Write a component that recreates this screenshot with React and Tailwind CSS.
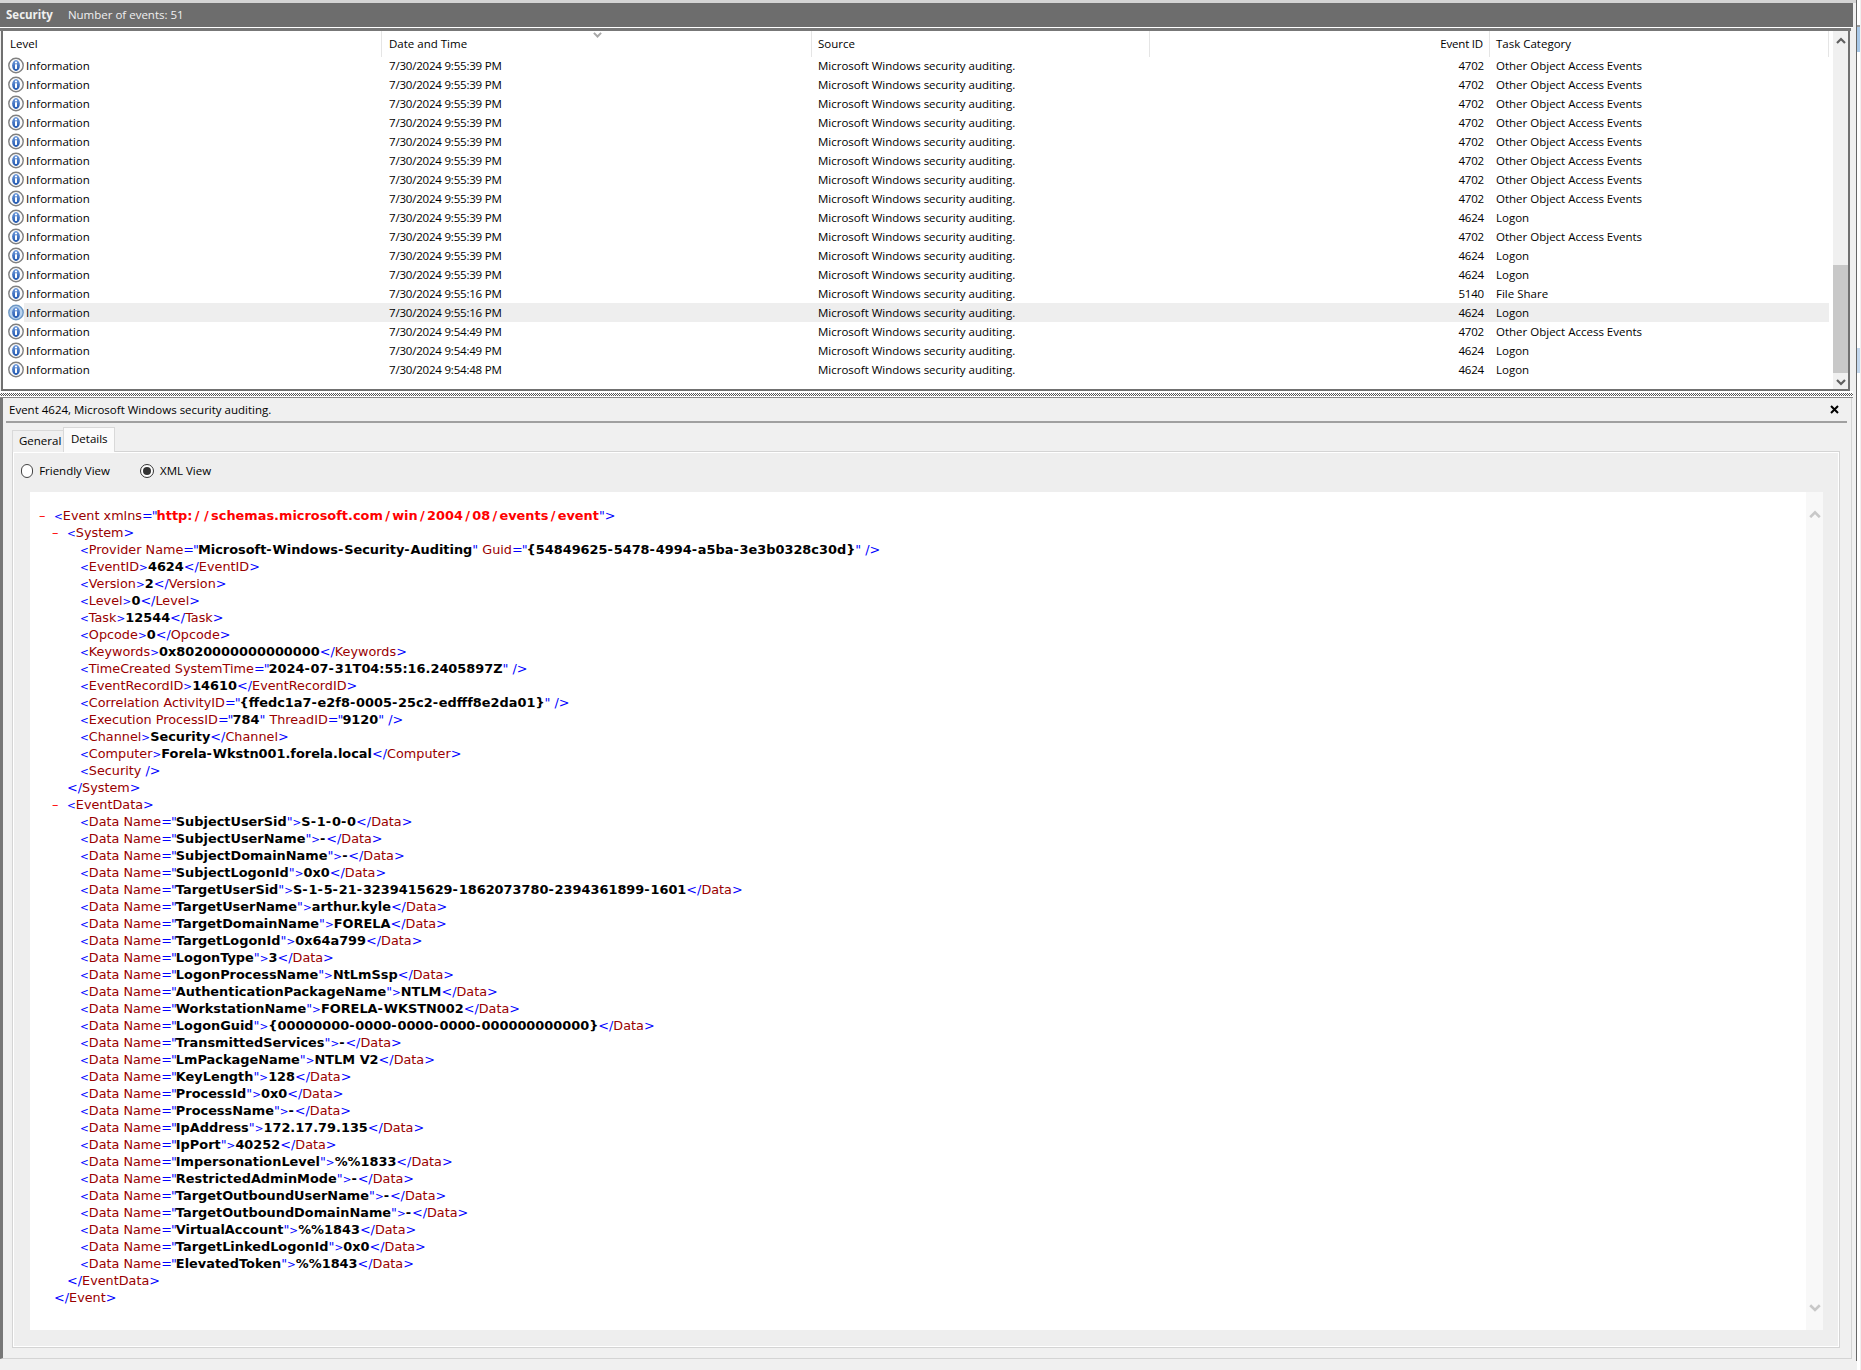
import React from 'react';

const OBJ = 'Other Object Access Events';
const rows = [
  ['9:55:39', 4702, OBJ], ['9:55:39', 4702, OBJ], ['9:55:39', 4702, OBJ], ['9:55:39', 4702, OBJ],
  ['9:55:39', 4702, OBJ], ['9:55:39', 4702, OBJ], ['9:55:39', 4702, OBJ], ['9:55:39', 4702, OBJ],
  ['9:55:39', 4624, 'Logon'], ['9:55:39', 4702, OBJ], ['9:55:39', 4624, 'Logon'], ['9:55:39', 4624, 'Logon'],
  ['9:55:16', 5140, 'File Share'], ['9:55:16', 4624, 'Logon', true], ['9:54:49', 4702, OBJ],
  ['9:54:49', 4624, 'Logon'], ['9:54:48', 4624, 'Logon'],
];

const dataItems = [
  ['SubjectUserSid', 'S-1-0-0'], ['SubjectUserName', '-'], ['SubjectDomainName', '-'], ['SubjectLogonId', '0x0'],
  ['TargetUserSid', 'S-1-5-21-3239415629-1862073780-2394361899-1601'], ['TargetUserName', 'arthur.kyle'],
  ['TargetDomainName', 'FORELA'], ['TargetLogonId', '0x64a799'], ['LogonType', '3'],
  ['LogonProcessName', 'NtLmSsp'], ['AuthenticationPackageName', 'NTLM'], ['WorkstationName', 'FORELA-WKSTN002'],
  ['LogonGuid', '{00000000-0000-0000-0000-000000000000}'], ['TransmittedServices', '-'], ['LmPackageName', 'NTLM V2'],
  ['KeyLength', '128'], ['ProcessId', '0x0'], ['ProcessName', '-'], ['IpAddress', '172.17.79.135'], ['IpPort', '40252'],
  ['ImpersonationLevel', '%%1833'], ['RestrictedAdminMode', '-'], ['TargetOutboundUserName', '-'],
  ['TargetOutboundDomainName', '-'], ['VirtualAccount', '%%1843'], ['TargetLinkedLogonId', '0x0'], ['ElevatedToken', '%%1843'],
];

const indents = ['pl-[24px]', 'pl-[37px]', 'pl-[50px]'];

const InfoIcon = ({ selected }) => (
  <svg width="16" height="17" viewBox="0 0 16 17" className="shrink-0">
    <defs>
      <linearGradient id="infoBlue" x1="0" y1="0" x2="0" y2="1">
        <stop offset="0" stopColor="#6f9bdc" />
        <stop offset="1" stopColor="#1f55ad" />
      </linearGradient>
    </defs>
    <circle cx="8" cy="8.5" r="7.2" fill={selected ? '#b9d3ee' : '#fbfbfb'} stroke={selected ? '#6f98c4' : '#808080'} strokeWidth="1.4" />
    <ellipse cx="8" cy="8.5" rx="3.9" ry="5.4" fill="url(#infoBlue)" />
    <circle cx="8" cy="5.5" r="1.1" fill="#fff" />
    <rect x="7" y="7.3" width="2" height="4.6" fill="#fff" />
  </svg>
);

const Chevron = ({ up, color, width = 10 }) => (
  <svg width={width} height={width * 0.7} viewBox="0 0 10 7" fill="none" stroke={color} strokeWidth="2.2">
    <path d={up ? 'M1 6L5 2l4 4' : 'M1 1l4 4 4-4'} />
  </svg>
);

const Blue = ({ children }) => <span className="text-[#0000ff] text-[10.5px]">{children}</span>;
const BlueFull = ({ children }) => <span className="text-[#0000ff]">{children}</span>;
const Red = ({ children }) => <span className="text-[#990000]">{children}</span>;

// bold slashes and hyphens are wider in the original font
const Val = ({ children, red }) => (
  <span className={red ? 'text-[12.9px] font-bold text-[#ff0000]' : 'text-[12.9px] font-bold text-black'}>
    {children.split(/([-/])/).map((part, i) => {
      if (part === '/') return <span key={i} className="mx-[2.3px]">/</span>;
      if (part === '-') return <span key={i} className="tracking-[0.8px]">-</span>;
      return part;
    })}
  </span>
);

const Attr = ({ name, value, red }) => (
  <>
    <Red> {name}</Red><span className="text-[#0000ff] tracking-[-1px]">="</span><Val red={red}>{value}</Val><BlueFull>"</BlueFull>
  </>
);

const XmlLine = ({ level, minus, children }) => (
  <div className={`h-[17px] leading-[17px] whitespace-pre ${indents[level]}`}>
    {minus && <span className="inline-block w-[15px] -ml-[15px] text-[#ff0000]">–</span>}
    {children}
  </div>
);

const Leaf = ({ tag, value }) => (
  <XmlLine level={2}>
    <Blue>&lt;</Blue><Red>{tag}</Red><Blue>&gt;</Blue><Val>{value}</Val><BlueFull>&lt;/</BlueFull><Red>{tag}</Red><BlueFull>&gt;</BlueFull>
  </XmlLine>
);

const Close = ({ level, tag }) => (
  <XmlLine level={level}><BlueFull>&lt;/</BlueFull><Red>{tag}</Red><BlueFull>&gt;</BlueFull></XmlLine>
);

const Empty = ({ tag, attrs = [] }) => (
  <XmlLine level={2}>
    <Blue>&lt;</Blue><Red>{tag}</Red>
    {attrs.map(([k, v]) => <Attr key={k} name={k} value={v} />)}
    <BlueFull> /&gt;</BlueFull>
  </XmlLine>
);

const cols = 'grid grid-cols-[379px_430px_338px_340px_339px]';

const EventList = () => (
  <div className="h-[360px] ml-[1px] w-[1849px] flex bg-white border-l-2 border-r-2 border-b-2 border-[#707070]">
    <div className="w-[1830px] relative">
      <div className={`${cols} h-[25px] items-stretch`}>
        <div className="pl-[7px] leading-[26px] border-r border-[#e5e5e5]">Level</div>
        <div className="pl-[7px] leading-[26px] border-r border-[#e5e5e5]">Date and Time</div>
        <div className="pl-[6px] leading-[26px] border-r border-[#e5e5e5]">Source</div>
        <div className="pr-[6px] leading-[26px] text-right tracking-[-0.2px] border-r border-[#e5e5e5]">Event ID</div>
        <div className="pl-[6px] leading-[26px] border-r border-[#e5e5e5]">Task Category</div>
      </div>
      <div className="absolute left-[590px] top-[1px]"><Chevron color="#a8a8a8" width={9} /></div>
      {rows.map(([time, id, cat, selected], i) => {
        const sel = selected ? 'bg-[#eeeeee]' : '';
        return (
          <div key={i} className={`${cols} h-[19px] leading-[19px]`}>
            <div className="flex items-center pl-[5px]">
              <InfoIcon selected={selected} />
              <span className={`flex-1 pl-[2px] h-[19px] ${sel}`}>Information</span>
            </div>
            <div className={`pl-[7px] tracking-[-0.2px] ${sel}`}>7/30/2024 {time} PM</div>
            <div className={`pl-[6px] ${sel}`}>Microsoft Windows security auditing.</div>
            <div className={`pr-[6px] text-right tracking-[-0.2px] ${sel}`}>{id}</div>
            <div className={`pl-[6px] ${sel}`}>{cat}</div>
          </div>
        );
      })}
    </div>
    <div className="ml-[1px] w-[15px] flex flex-col items-center bg-[#f0f0f0]">
      <div className="h-[22px] pt-[6px] flex justify-center"><Chevron up color="#606060" /></div>
      <div className="h-[212px]" />
      <div className="h-[108px] w-full bg-[#c8c8c8]" />
      <div className="pt-[6px] flex justify-center"><Chevron color="#606060" /></div>
    </div>
  </div>
);

const Radio = ({ checked, label }) => (
  <div className="flex items-center gap-[6px] whitespace-nowrap">
    <span className={`w-[14px] h-[14px] rounded-full border flex items-center justify-center bg-white ${checked ? 'border-[#333333]' : 'border-[#444444]'}`}>
      {checked && <span className="w-[8px] h-[8px] rounded-full bg-[#333333]" />}
    </span>
    <span>{label}</span>
  </div>
);

const XmlView = () => (
  <div className="ml-[17px] w-[1793px] h-[838px] flex bg-white font-['DejaVu_Sans',Verdana,sans-serif] text-[12.8px]">
    <div className="w-[1776px] pt-[15px]">
      <XmlLine level={0} minus>
        <Blue>&lt;</Blue><Red>Event</Red><Attr name="xmlns" value="http://schemas.microsoft.com/win/2004/08/events/event" red /><BlueFull>&gt;</BlueFull>
      </XmlLine>
      <XmlLine level={1} minus><Blue>&lt;</Blue><Red>System</Red><BlueFull>&gt;</BlueFull></XmlLine>
      <Empty tag="Provider" attrs={[['Name', 'Microsoft-Windows-Security-Auditing'], ['Guid', '{54849625-5478-4994-a5ba-3e3b0328c30d}']]} />
      <Leaf tag="EventID" value="4624" />
      <Leaf tag="Version" value="2" />
      <Leaf tag="Level" value="0" />
      <Leaf tag="Task" value="12544" />
      <Leaf tag="Opcode" value="0" />
      <Leaf tag="Keywords" value="0x8020000000000000" />
      <Empty tag="TimeCreated" attrs={[['SystemTime', '2024-07-31T04:55:16.2405897Z']]} />
      <Leaf tag="EventRecordID" value="14610" />
      <Empty tag="Correlation" attrs={[['ActivityID', '{ffedc1a7-e2f8-0005-25c2-edfff8e2da01}']]} />
      <Empty tag="Execution" attrs={[['ProcessID', '784'], ['ThreadID', '9120']]} />
      <Leaf tag="Channel" value="Security" />
      <Leaf tag="Computer" value="Forela-Wkstn001.forela.local" />
      <Empty tag="Security" />
      <Close level={1} tag="System" />
      <XmlLine level={1} minus><Blue>&lt;</Blue><Red>EventData</Red><BlueFull>&gt;</BlueFull></XmlLine>
      {dataItems.map(([name, value]) => (
        <XmlLine level={2} key={name}>
          <Blue>&lt;</Blue><Red>Data</Red><Attr name="Name" value={name} /><Blue>&gt;</Blue><Val>{value}</Val><BlueFull>&lt;/</BlueFull><Red>Data</Red><BlueFull>&gt;</BlueFull>
        </XmlLine>
      ))}
      <Close level={1} tag="EventData" />
      <Close level={0} tag="Event" />
    </div>
    <div className="w-[17px] bg-[#f8f8f8] flex flex-col items-center justify-between pt-[18px] pb-[18px]">
      <Chevron up color="#c8c8c8" width={12} />
      <Chevron color="#c8c8c8" width={12} />
    </div>
  </div>
);

const DetailPanel = () => (
  <div className="w-[1852px] h-[961px] bg-[#f0f0f0] border-l-[3px] border-r border-b border-l-[#777777] border-r-[#d4d4d4] border-b-[#d4d4d4]">
    <div className="h-[23px] pl-[6px] pr-[12px] flex items-center justify-between">
      <span>Event 4624, Microsoft Windows security auditing.</span>
      <svg width="9" height="9" viewBox="0 0 9 9" stroke="#000" strokeWidth="2"><path d="M1 1l7 7M8 1l-7 7" /></svg>
    </div>
    <div className="h-[2px] ml-[3px] mr-[4px] bg-[#a0a0a0]" />
    <div className="h-[28px] pl-[9px] flex items-end relative z-10">
      <div className="h-[22px] w-[52px] -mb-[1px] pl-[6px] leading-[20px] border border-b-0 border-[#d9d9d9] bg-[#f0f0f0]">General</div>
      <div className="h-[25px] w-[52px] -mb-[1px] -ml-[1px] pl-[7px] leading-[21px] border border-b-0 border-[#d9d9d9] bg-[#fbfbfb]">Details</div>
    </div>
    <div className="ml-[9px] w-[1828px] h-[897px] border border-[#d4d4d4] shadow-[inset_0_0_0_1px_#ffffff] bg-[#eeeeee]">
      <div className="h-[38px] pl-[8px] flex items-center gap-[30px]">
        <div className="w-[89px]"><Radio label="Friendly View" /></div>
        <Radio checked label="XML View" />
      </div>
      <div className="h-[2px]" />
      <XmlView />
    </div>
  </div>
);

export default function App() {
  return (
    <div className="w-[1861px] h-[1370px] overflow-hidden flex bg-[#f0f0f0] text-black text-[11.5px] font-['Open_Sans','Noto_Sans',sans-serif]">
      <div className="w-[1857px] h-[1361px] border-r border-[#666666]">
        <div className="h-[3px] bg-[#d4d4d4]" />
        <div className="w-[1853px] h-[24px] pl-[6px] flex items-center gap-[15px] bg-[#6d6d6d] text-[#f0f0f0]">
          <span className="font-bold">Security</span>
          <span>Number of events: 51</span>
        </div>
        <div className="w-[1853px] h-[1px] bg-white" />
        <div className="w-[1851px] h-[3px] bg-[#777777]" />
        <EventList />
        <div className="w-[1853px] h-[2px] bg-white" />
        <div className="w-[1853px] h-[3px] [background:repeating-conic-gradient(#555555_0_25%,#ffffff_0_50%)_0_0/2px_2px]" />
        <div className="w-[1853px] h-[1px] bg-white" />
        <div className="w-[1853px] h-[1px] bg-[#888888]" />
        <DetailPanel />
      </div>
      <div className="w-[3px] h-[1370px] bg-white">
        <div className="h-[25px]" />
        <div className="h-[2px] bg-[#999999]" />
        <div className="h-[25px] bg-[#a8c8e8]" />
        <div className="h-[296px]" />
        <div className="h-[25px] bg-[#c4d8ee]" />
      </div>
    </div>
  );
}
